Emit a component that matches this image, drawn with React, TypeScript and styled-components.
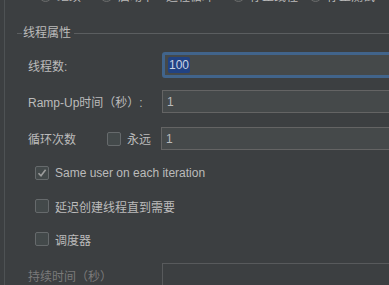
import React from "react";
import styled, { createGlobalStyle } from "styled-components";

const Global = createGlobalStyle`
  html, body { margin: 0; padding: 0; background: #3c3f41; overflow: hidden; }
  body { width: 389px; height: 285px; }
  * { box-sizing: border-box; }
`;

const FONT = `"Liberation Sans", "Noto Sans CJK SC", sans-serif`;

const Page = styled.div`
  width: 440px;
  height: 285px;
  overflow: hidden;
  font-family: ${FONT};
  font-size: 12px;
  color: #bbbbbb;
  display: flex;
`;

const Gutter = styled.div`
  width: 5px;
  flex: none;
  border-right: 1px solid #4e5254;
`;

const Main = styled.div`
  flex: 1;
  display: flex;
  flex-direction: column;
`;

const RadioRow = styled.div`
  height: 14px;
  margin-top: -12px;
  display: flex;
  align-items: center;
  padding-left: 34px;
`;

const RadioItem = styled.div<{ $w: number }>`
  width: ${(p) => p.$w}px;
  flex: none;
  display: flex;
  align-items: center;
  gap: 5px;
  white-space: nowrap;
`;

const RadioDot = styled.span`
  width: 13px;
  height: 13px;
  border-radius: 50%;
  border: 1px solid #6b6b6b;
  background: #43494a;
  flex: none;
`;

const GroupHeader = styled.div`
  margin-top: 23px;
  height: 16px;
  display: flex;
  align-items: center;
  padding-left: 12px;
`;

const HeaderLine = styled.span<{ $w?: number }>`
  height: 1px;
  background: #5b5e60;
  ${(p) => (p.$w ? `width: ${p.$w}px; flex: none;` : `flex: 1;`)}
`;

const GroupTitle = styled.span`
  padding: 0 3px 0 1px;
  line-height: 16px;
  color: #bbbbbb;
`;

const Body = styled.div`
  padding-left: 23px;
  display: flex;
  flex-direction: column;
`;

const FieldRow = styled.div<{ $mt: number; $h: number }>`
  margin-top: ${(p) => p.$mt}px;
  height: ${(p) => p.$h}px;
  display: flex;
  align-items: center;
`;

const Label = styled.span<{ $w?: number; $disabled?: boolean }>`
  width: ${(p) => p.$w ?? 134}px;
  flex: none;
  white-space: nowrap;
  color: ${(p) => (p.$disabled ? "#7a7a7a" : "#bbbbbb")};
`;

const Input = styled.div<{ $focused?: boolean; $disabled?: boolean }>`
  flex: 1;
  align-self: stretch;
  display: flex;
  align-items: center;
  padding-left: ${(p) => (p.$focused ? 3 : 4)}px;
  background: ${(p) => (p.$disabled ? "#3c3f41" : "#45494a")};
  border: ${(p) =>
    p.$focused ? "3px solid #41648b" : p.$disabled ? "1px solid #585a5c" : "1px solid #646464"};
  border-radius: ${(p) => (p.$focused ? 3 : 0)}px;
  color: #bbbbbb;
  white-space: nowrap;
`;

const Selected = styled.span`
  background: #214283;
  color: #c9d3e6;
  line-height: 16px;
  padding: 0 1px;
  border-radius: 2px;
`;

const Box = styled.span`
  width: 14px;
  height: 14px;
  flex: none;
  border: 1px solid #666a6c;
  border-radius: 2px;
  background: #43494a;
  display: flex;
  align-items: center;
  justify-content: center;
`;

const CheckRow = styled.div<{ $mt: number }>`
  margin-top: ${(p) => p.$mt}px;
  height: 14px;
  display: flex;
  align-items: center;
  gap: 6px;
  padding-left: 7px;
  white-space: nowrap;
`;

const ForeverWrap = styled.div`
  width: 55px;
  flex: none;
  display: flex;
  align-items: center;
  gap: 6px;
  padding-left: 1px;
`;

const LoopLabel = styled(Label)`
  width: 78px;
`;

function Check({ checked }: { checked?: boolean }) {
  return (
    <Box>
      {checked && (
        <svg width="10" height="10" viewBox="0 0 10 10">
          <path d="M1.5 5.2 L4 7.8 L8.6 1.8" fill="none" stroke="#9d9d9d" strokeWidth="1.6" />
        </svg>
      )}
    </Box>
  );
}

export default function App() {
  return (
    <>
      <Global />
      <Page>
        <Gutter />
        <Main>
          <RadioRow>
            <RadioItem $w={61}><RadioDot />继续</RadioItem>
            <RadioItem $w={132}><RadioDot />启动下一进程循环</RadioItem>
            <RadioItem $w={77}><RadioDot />停止线程</RadioItem>
            <RadioItem $w={90}><RadioDot />停止测试</RadioItem>
            <RadioItem $w={100}><RadioDot />立即停止测试</RadioItem>
          </RadioRow>
          <GroupHeader>
            <HeaderLine $w={5} />
            <GroupTitle>线程属性</GroupTitle>
            <HeaderLine />
          </GroupHeader>
          <Body>
            <FieldRow $mt={11} $h={26}>
              <Label>线程数:</Label>
              <Input $focused>
                <Selected>100</Selected>
              </Input>
            </FieldRow>
            <FieldRow $mt={12} $h={23}>
              <Label>Ramp-Up时间（秒）:</Label>
              <Input>1</Input>
            </FieldRow>
            <FieldRow $mt={14} $h={23}>
              <LoopLabel>循环次数</LoopLabel>
              <ForeverWrap>
                <Check />
                永远
              </ForeverWrap>
              <Input>1</Input>
            </FieldRow>
            <CheckRow $mt={16}>
              <Check checked />
              Same user on each iteration
            </CheckRow>
            <CheckRow $mt={19}>
              <Check />
              延迟创建线程直到需要
            </CheckRow>
            <CheckRow $mt={19}>
              <Check />
              调度器
            </CheckRow>
            <FieldRow $mt={17} $h={24}>
              <Label $disabled>持续时间（秒）</Label>
              <Input $disabled />
            </FieldRow>
          </Body>
        </Main>
      </Page>
    </>
  );
}
